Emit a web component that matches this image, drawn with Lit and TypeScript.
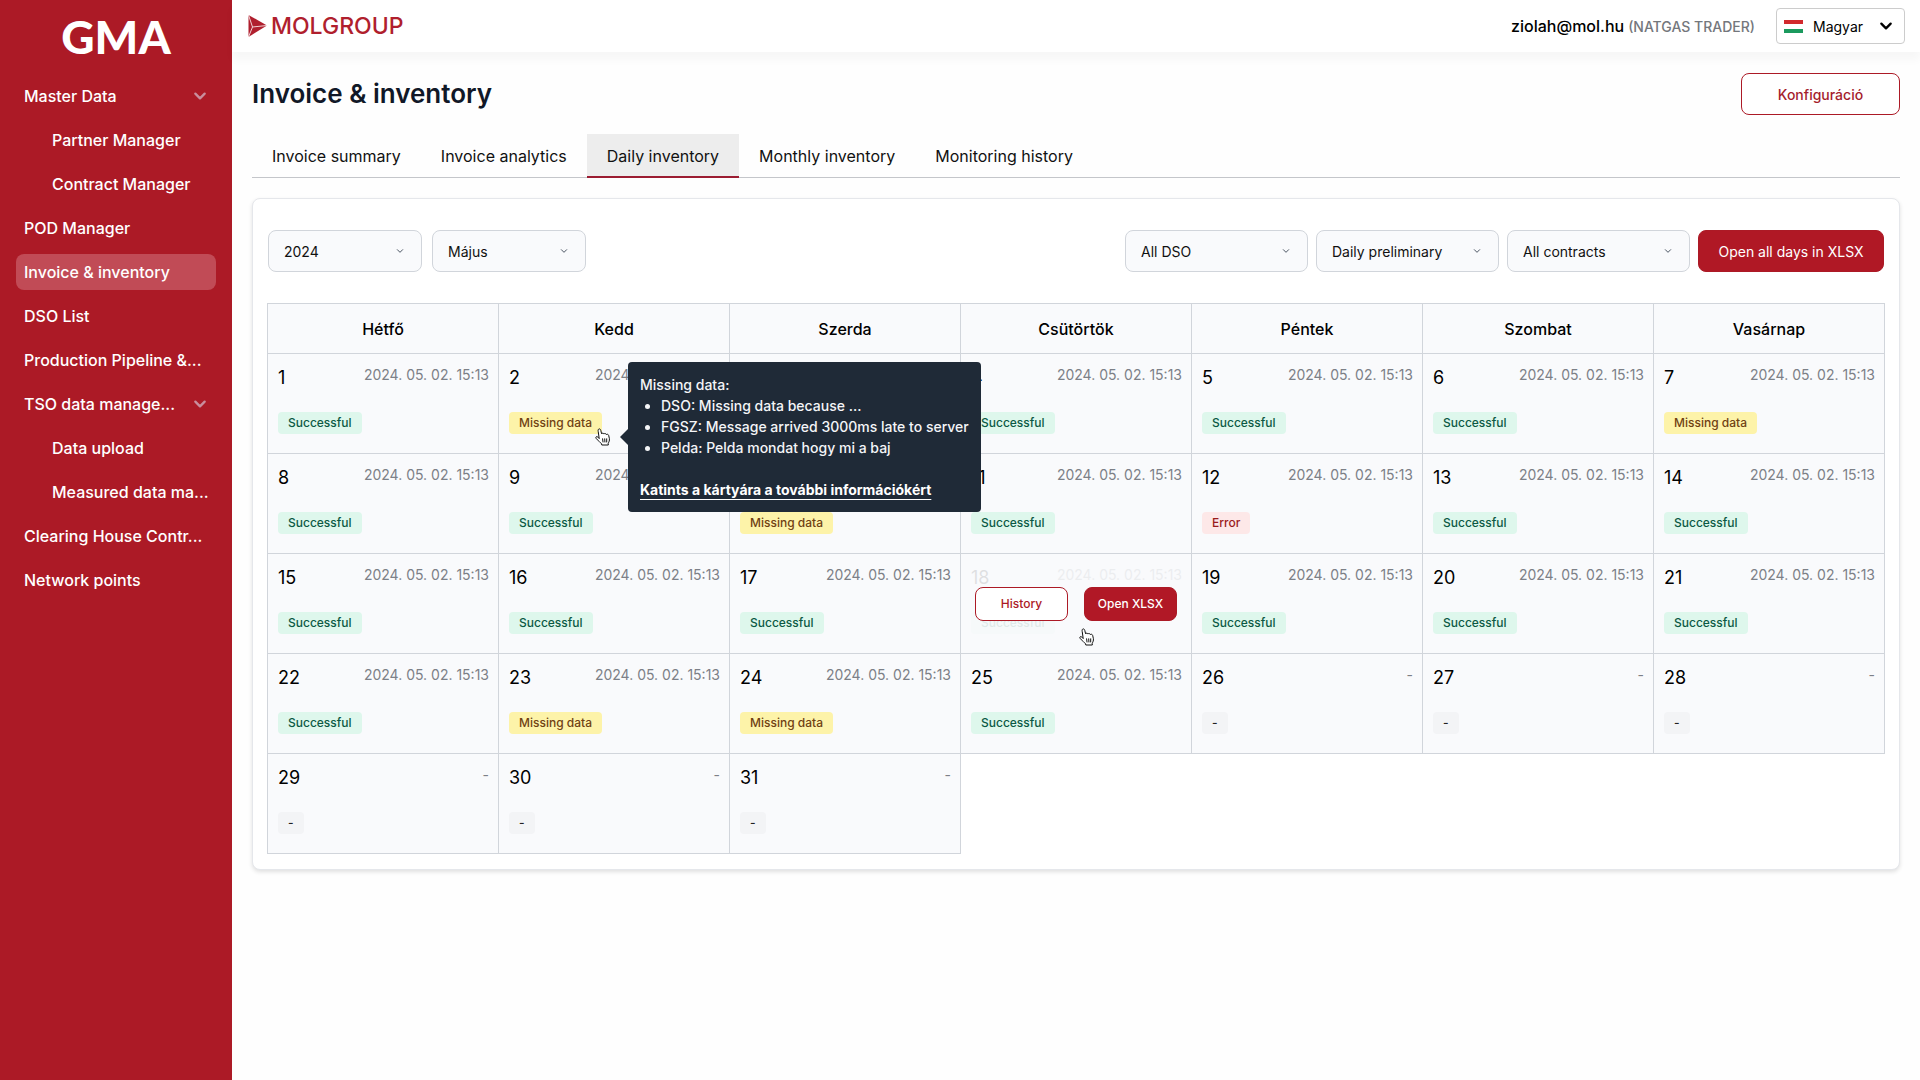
import { LitElement, html, svg, css, nothing } from "lit";
import { customElement, property } from "lit/decorators.js";

type Status = "ok" | "missing" | "error" | "none";

interface Day {
  day: number;
  stamp: string;
  status: Status;
}

const LABELS: Record<Status, string> = {
  ok: "Successful",
  missing: "Missing data",
  error: "Error",
  none: "-",
};

const WEEKDAYS = ["Hétfő", "Kedd", "Szerda", "Csütörtök", "Péntek", "Szombat", "Vasárnap"];

const MISSING = new Set([2, 7, 10, 23, 24]);
const LAST_LOADED = 25;

const DAYS: Day[] = Array.from({ length: 31 }, (_, i) => {
  const day = i + 1;
  const loaded = day <= LAST_LOADED;
  return {
    day,
    stamp: loaded ? "2024. 05. 02. 15:13" : "-",
    status: !loaded ? "none" : MISSING.has(day) ? "missing" : day === 12 ? "error" : "ok",
  };
});

const WEEKS: Day[][] = [0, 7, 14, 21, 28].map((start) => DAYS.slice(start, start + 7));

const NAV = [
  { label: "Master Data", group: true },
  { label: "Partner Manager", child: true },
  { label: "Contract Manager", child: true },
  { label: "POD Manager" },
  { label: "Invoice & inventory", active: true },
  { label: "DSO List" },
  { label: "Production Pipeline &..." },
  { label: "TSO data manage...", group: true },
  { label: "Data upload", child: true },
  { label: "Measured data ma...", child: true },
  { label: "Clearing House Contr..." },
  { label: "Network points" },
];

const TABS = ["Invoice summary", "Invoice analytics", "Daily inventory", "Monthly inventory", "Monitoring history"];

const chevron = (size: number, stroke: number) => html`<svg
  class="chevron"
  width=${size}
  height=${size}
  viewBox="0 0 12 12"
  fill="none"
  stroke="currentColor"
  stroke-width=${stroke}
  stroke-linecap="round"
  stroke-linejoin="round"
  aria-hidden="true"
>
  ${svg`<path d="M2 4l4 4 4-4"/>`}
</svg>`;

const hand = html`<svg class="hand" width="16" height="18" viewBox="0 0 16 18" aria-hidden="true">
  ${svg`<path d="M4.2 10.6 3.2 3.4C2.9 1.9 3.4 1 4.2 .9c.8-.1 1.3.5 1.6 1.6l.8 3.3c.2-.8 2-.9 2.3.2.5-.7 2-.7 2.4.5.8-.6 2.1-.2 2.4 1l.7 3.2c.2 1.800-.4 3.200-1.200 4.600l.1 1.700H6.800l-.3-1.400C4.900 14.600 3.300 12.500 1.400 10.700.6 9.900.7 8.900 1.400 8.700c1.100-.3 2 .8 2.800 1.900z" fill="#fff" stroke="#111" stroke-width="1" stroke-linejoin="round"/>
  <path d="M7.600 10.800l.4 3.200M9.700 10.800l.2 3.200M11.700 10.800v3.200" stroke="#111" stroke-width="1" stroke-linecap="round"/>`}
</svg>`;

const reset = css`
  *,
  *::before,
  *::after {
    box-sizing: border-box;
  }
  a {
    color: inherit;
    text-decoration: none;
  }
  button,
  select {
    font: inherit;
    color: inherit;
    margin: 0;
    cursor: pointer;
  }
`;

@customElement("app-select")
export class AppSelect extends LitElement {
  @property() label = "";
  @property() value = "";

  static styles = [
    reset,
    css`
      :host {
        display: block;
      }
      .box {
        display: grid;
        align-items: center;
      }
      select,
      .chevron {
        grid-area: 1 / 1;
      }
      select {
        appearance: none;
        width: 100%;
        height: 42px;
        padding: 0 32px 0 15px;
        border: 1px solid #d1d5db;
        border-radius: 8px;
        background: #f9fafc;
        color: #111;
        font-size: 14px;
      }
      .chevron {
        justify-self: end;
        margin-right: 18px;
        color: #4b5563;
        pointer-events: none;
      }
    `,
  ];

  render() {
    return html`<div class="box">
      <select aria-label=${this.label}>
        <option>${this.value}</option>
      </select>
      ${chevron(8, 1.5)}
    </div>`;
  }
}

@customElement("app-sidebar")
export class AppSidebar extends LitElement {
  static styles = [
    reset,
    css`
      :host {
        display: block;
        background: #ac1a26;
        color: #fff;
      }
      .logo {
        padding-top: 8px;
        text-align: center;
        font: 900 46px/58px Lato, sans-serif;
      }
      nav {
        display: flex;
        flex-direction: column;
        gap: 8px;
        padding: 12px 16px;
      }
      .item {
        display: flex;
        align-items: center;
        justify-content: space-between;
        height: 36px;
        padding: 0 8px;
        border-radius: 8px;
        font-size: 16px;
        font-weight: 500;
      }
      .child {
        padding-left: 36px;
      }
      .active {
        background: #c14b56;
      }
      .label {
        white-space: nowrap;
      }
      .chevron {
        flex: none;
        margin-right: 1px;
        color: #c98e9d;
      }
    `,
  ];

  render() {
    return html`<div class="logo">GMA</div>
      <nav aria-label="Main">
        ${NAV.map(
          (n) => html`<a
            href="#"
            class="item ${n.child ? "child" : ""} ${n.active ? "active" : ""}"
            ><span class="label">${n.label}</span>${n.group ? chevron(14, 2) : nothing}</a
          >`,
        )}
      </nav>`;
  }
}

@customElement("app-header")
export class AppHeader extends LitElement {
  static styles = [
    reset,
    css`
      :host {
        display: flex;
        align-items: center;
        justify-content: space-between;
        height: 52px;
        padding: 0 15px 0 16px;
        background: #fff;
        box-shadow: 0 8px 8px rgba(0, 0, 0, 0.03);
      }
      .brand {
        display: flex;
        align-items: center;
        gap: 4px;
        color: #b01f2e;
        font-size: 23px;
        font-weight: 500;
        line-height: 24px;
      }
      .user {
        display: flex;
        align-items: center;
        font-size: 16px;
        font-weight: 500;
        color: #000;
      }
      .role {
        margin-left: 4px;
        font-size: 14px;
        color: #74777c;
      }
      .lang {
        display: grid;
        align-items: center;
        width: 129px;
        margin-left: 21px;
      }
      .lang > * {
        grid-area: 1 / 1;
      }
      .lang select {
        appearance: none;
        width: 100%;
        height: 36px;
        padding: 0 32px 0 36px;
        border: 1px solid #ccc;
        border-radius: 4px;
        background: #fff;
        font-size: 14px;
        font-weight: 400;
      }
      .flag {
        margin-left: 8px;
        pointer-events: none;
      }
      .chevron {
        justify-self: end;
        margin-right: 12px;
        pointer-events: none;
      }
    `,
  ];

  render() {
    return html`<div class="brand">
        <svg width="19" height="22" viewBox="0 0 19 22" aria-hidden="true">
          ${svg`<path d="M.5 0 19 10.500.5 22z" fill="#b01f2e"/><path d="M.5 0 4.500 12 19 10.500M4.500 12 .5 22" fill="none" stroke="#fff" stroke-width=".8"/>`}
        </svg>
        <span>MOLGROUP</span>
      </div>
      <div class="user">
        <span>ziolah@mol.hu</span>
        <span class="role">(NATGAS TRADER)</span>
        <div class="lang">
          <select aria-label="Language">
            <option>Magyar</option>
          </select>
          <svg class="flag" width="19" height="13" viewBox="0 0 19 13" aria-hidden="true">
            ${svg`<path fill="#d2292d" d="M0 0h19v4H0z"/><path fill="#fff" d="M0 4h19v5H0z"/><path fill="#1b9a5e" d="M0 9h19v4H0z"/>`}
          </svg>
          ${chevron(14, 2)}
        </div>
      </div>`;
  }
}

@customElement("app-calendar")
export class AppCalendar extends LitElement {
  static styles = [
    reset,
    css`
      :host {
        display: block;
      }
      table {
        width: 100%;
        table-layout: fixed;
        border-collapse: collapse;
      }
      th,
      td {
        border: 1px solid #d1d5db;
        background: #f9fafc;
      }
      th {
        height: 50px;
        padding: 0;
        font-size: 16px;
        font-weight: 500;
        color: #000;
      }
      td {
        position: relative;
        height: 100px;
        padding: 8px 9px 0 10px;
        vertical-align: top;
      }
      .top {
        display: flex;
        justify-content: space-between;
        height: 49px;
      }
      .day {
        font-size: 18px;
        line-height: 32px;
        color: #000;
      }
      .stamp {
        font-size: 14px;
        line-height: 26px;
        color: #7c8087;
      }
      .badge {
        display: inline-block;
        height: 22px;
        padding: 0 10px;
        border-radius: 4px;
        font-size: 12px;
        font-weight: 500;
        line-height: 22px;
      }
      .ok {
        background: #def7ec;
        color: #0c5a44;
      }
      .missing {
        background: #fdf3a9;
        color: #704112;
      }
      .error {
        background: #fde8e8;
        color: #9b1c1c;
      }
      .none {
        background: #f3f4f6;
        color: #222;
      }
      .faded > .content {
        opacity: 0.1;
      }
      .actions {
        position: absolute;
        inset: 0;
        display: flex;
        align-items: center;
        justify-content: space-between;
        padding: 0 14px;
      }
      .actions button {
        width: 93px;
        height: 34px;
        padding: 0;
        border: 1px solid #ac1a26;
        border-radius: 8px;
        background: #fff;
        color: #ac1a26;
        font-size: 12px;
        font-weight: 500;
      }
      .actions .solid {
        background: #b11826;
        color: #fff;
      }
      .pointer {
        position: absolute;
        z-index: 3;
      }
      .at-badge {
        left: 96px;
        top: 74px;
      }
      .at-actions {
        left: 118px;
        top: 74px;
      }
      .hand {
        display: block;
      }
      .tooltip {
        position: absolute;
        z-index: 2;
        left: 129px;
        top: 8px;
        padding: 12px;
        border-radius: 4px;
        background: #1f2a37;
        color: #f4f5f7;
        font-size: 14px;
        font-weight: 500;
        line-height: 21px;
        white-space: nowrap;
      }
      .tooltip::before {
        content: "";
        position: absolute;
        left: -8px;
        top: 67px;
        border: solid transparent;
        border-width: 8px 8px 8px 0;
        border-right-color: #1f2a37;
      }
      .tooltip p,
      .tooltip ul {
        margin: 0;
      }
      .tooltip ul {
        padding: 0 0 21px 21px;
      }
      .tooltip a {
        font-weight: 700;
        color: #fff;
        text-decoration: underline;
        text-underline-offset: 4px;
      }
    `,
  ];

  private tooltip() {
    return html`<span class="pointer at-badge">${hand}</span>
      <div class="tooltip" role="tooltip">
        <p>Missing data:</p>
        <ul>
          <li>DSO: Missing data because ...</li>
          <li>FGSZ: Message arrived 3000ms late to server</li>
          <li>Pelda: Pelda mondat hogy mi a baj</li>
        </ul>
        <a href="#">Katints a kártyára a további információkért</a>
      </div>`;
  }

  private actions() {
    return html`<div class="actions">
        <button type="button">History</button>
        <button type="button" class="solid">Open XLSX</button>
      </div>
      <span class="pointer at-actions">${hand}</span>`;
  }

  render() {
    return html`<table>
      <thead>
        <tr>
          ${WEEKDAYS.map((d) => html`<th scope="col">${d}</th>`)}
        </tr>
      </thead>
      <tbody>
        ${WEEKS.map(
          (week) => html`<tr>
            ${week.map(
              (d) => html`<td class=${d.day === 18 ? "faded" : ""}>
                <div class="content">
                  <div class="top">
                    <span class="day">${d.day}</span>
                    <span class="stamp">${d.stamp}</span>
                  </div>
                  <span class="badge ${d.status}">${LABELS[d.status]}</span>
                </div>
                ${d.day === 2 ? this.tooltip() : nothing} ${d.day === 18 ? this.actions() : nothing}
              </td>`,
            )}
          </tr>`,
        )}
      </tbody>
    </table>`;
  }
}

@customElement("app-root")
export class AppRoot extends LitElement {
  static styles = [
    reset,
    css`
      :host {
        display: grid;
        grid-template-columns: 232px 1fr;
        min-height: 100vh;
        background: #fefefe;
        font-family: Inter, "Liberation Sans", sans-serif;
      }
      main {
        padding: 21px 20px 32px;
      }
      .title-row {
        display: flex;
        align-items: center;
        justify-content: space-between;
      }
      h1 {
        margin: 0;
        font-size: 26px;
        font-weight: 600;
        line-height: 42px;
        color: #111827;
      }
      .outline,
      .solid {
        height: 42px;
        padding: 0 19px;
        border: 1px solid #ac1a26;
        border-radius: 8px;
        font-size: 14px;
      }
      .outline {
        min-width: 159px;
        background: #fff;
        color: #a51d2d;
        font-weight: 500;
      }
      .solid {
        min-width: 186px;
        background: #b01825;
        color: #fff;
      }
      .tabs {
        display: flex;
        margin-top: 19px;
        box-shadow: inset 0 -1px #c4c6ca;
      }
      .tab {
        height: 44px;
        padding: 0 20px;
        border-bottom: 2px solid transparent;
        font-size: 16px;
        line-height: 44px;
        color: #111;
      }
      .tab.active {
        background: #ededed;
        border-color: #9b1c31;
      }
      .card {
        margin-top: 20px;
        padding: 31px 14px 15px;
        border: 1px solid #e5e7eb;
        border-radius: 8px;
        background: #fff;
        box-shadow: 0 2px 4px rgba(0, 0, 0, 0.12);
      }
      .filters {
        display: flex;
        gap: 8px;
        margin-bottom: 31px;
        padding: 0 1px;
      }
      .period {
        width: 154px;
        margin-right: 2px;
      }
      .scope {
        width: 183px;
      }
      .spacer {
        flex: 1;
      }
    `,
  ];

  render() {
    return html`<app-sidebar></app-sidebar>
      <div>
        <app-header></app-header>
        <main>
          <div class="title-row">
            <h1>Invoice &amp; inventory</h1>
            <button type="button" class="outline">Konfiguráció</button>
          </div>
          <nav class="tabs" aria-label="Invoice views">
            ${TABS.map((t) => html`<a href="#" class="tab ${t === "Daily inventory" ? "active" : ""}">${t}</a>`)}
          </nav>
          <section class="card">
            <div class="filters">
              <app-select class="period" label="Year" value="2024"></app-select>
              <app-select class="period" label="Month" value="Május"></app-select>
              <span class="spacer"></span>
              <app-select class="scope" label="DSO" value="All DSO"></app-select>
              <app-select class="scope" label="Report type" value="Daily preliminary"></app-select>
              <app-select class="scope" label="Contract" value="All contracts"></app-select>
              <button type="button" class="solid">Open all days in XLSX</button>
            </div>
            <app-calendar></app-calendar>
          </section>
        </main>
      </div>`;
  }
}
